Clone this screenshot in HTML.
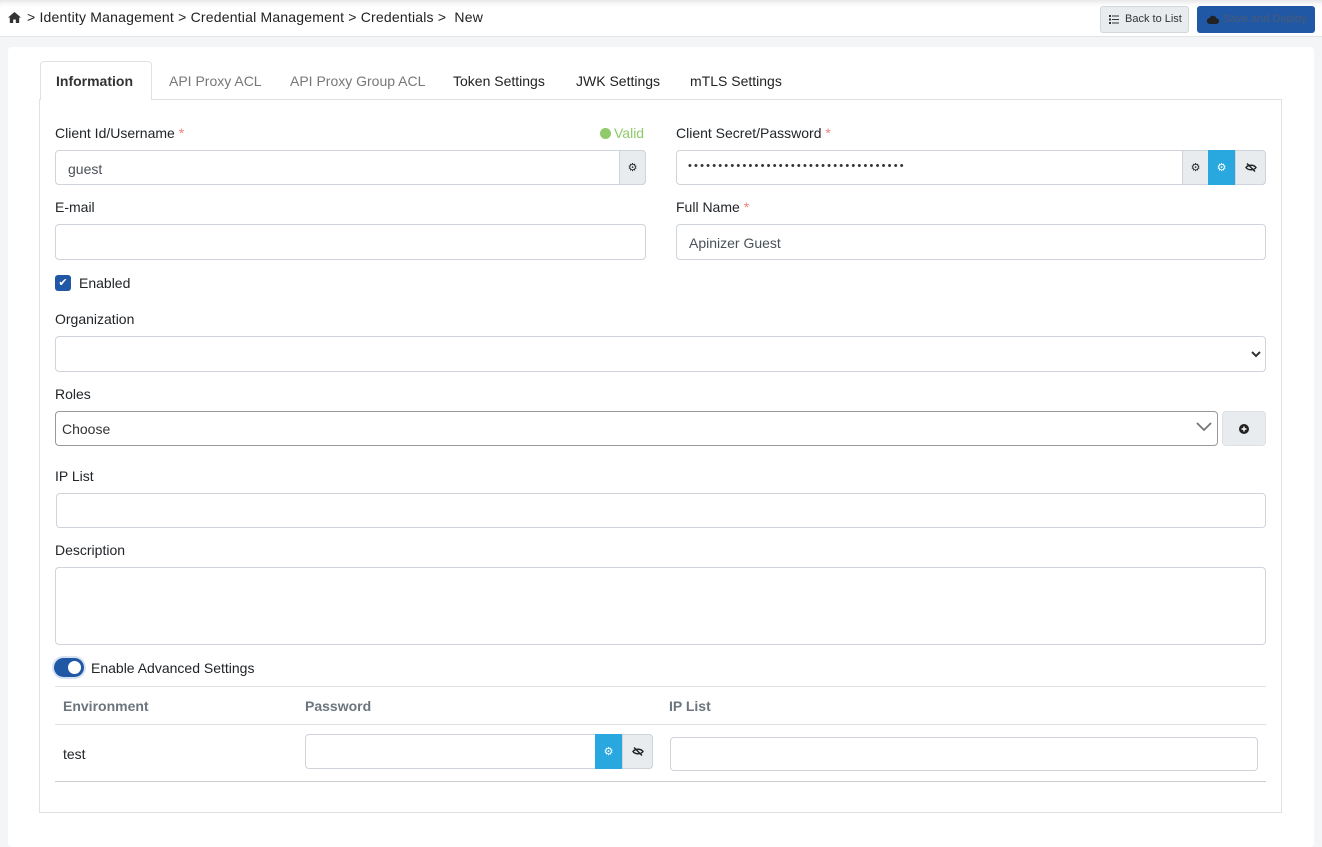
<!DOCTYPE html>
<html><head><meta charset="utf-8"><style>
*{box-sizing:border-box;margin:0;padding:0}
body{width:1322px;height:825px;background:#f4f5f7;font-family:"Liberation Sans",sans-serif;font-size:14px;color:#212529;position:relative;overflow:hidden}
.a{position:absolute;white-space:nowrap}
.top{left:0;top:0;width:1322px;height:37px;background:#fff;border-bottom:1px solid #e2e4e8;box-shadow:inset 0 6px 6px -4px rgba(0,0,0,.12)}
.card{left:8px;top:47px;width:1306px;height:800px;background:#fff;border-radius:4px}
.lbl{font-size:14px;color:#212529}
.req{color:#f08080}
.inp{background:#fff;border:1px solid #ced4da;border-radius:4px}
.add{background:#e9ecef;border:1px solid #ced4da;display:flex;align-items:center;justify-content:center}
.blue{background:#29a8e0;border-color:#29a8e0}
.txt{font-size:14px;color:#495057}
.tab{top:61px;height:38px;line-height:40px;font-size:14px;color:#777}
.th{font-weight:bold;color:#6c757d;font-size:14px}
</style></head><body>
<div class="a top"></div>
<svg class="a" style="left:8px;top:12px" width="13" height="11" viewBox="0 0 13 11"><path d="M6.5 0L0 5.5h1.8V11h3.4V7.5h2.6V11h3.4V5.5H13z" fill="#333"/></svg>
<div class="a" style="left:27px;top:9px;font-size:14px;color:#222;letter-spacing:0.2px">&gt; Identity Management &gt; Credential Management &gt; Credentials &gt;&nbsp; New</div>
<div class="a" style="left:1100px;top:6px;width:89px;height:27px;background:#e9ecef;border:1px solid #d3d6da;border-radius:3px;font-size:11px;line-height:25px;color:#333;padding-left:24px">Back to List</div>
<svg class="a" style="left:1109px;top:15px" width="10" height="9" viewBox="0 0 10 9"><g fill="#333"><rect x="0" y="0" width="2" height="2"/><rect x="0" y="3.5" width="2" height="2"/><rect x="0" y="7" width="2" height="2"/><rect x="3" y="0.5" width="7" height="1"/><rect x="3" y="4" width="7" height="1"/><rect x="3" y="7.5" width="7" height="1"/></g></svg>
<div class="a" style="left:1197px;top:6px;width:118px;height:27px;background:#2158a5;border-radius:3px"></div>
<div class="a" style="left:1223px;top:12px;font-size:11px;line-height:14px;color:#4a5a75">Save and Deploy</div>
<svg class="a" style="left:1207px;top:15px" width="12" height="9" viewBox="0 0 12 9"><path d="M3 9a3 3 0 0 1-.3-6A3.5 3.5 0 0 1 9.3 3.2 2.9 2.9 0 0 1 9 9z" fill="#222"/></svg>
<div class="a card"></div>
<div class="a" style="left:39px;top:99px;width:1243px;height:714px;border:1px solid #dee2e6"></div>
<div class="a" style="left:40px;top:61px;width:112px;height:39px;background:#fff;border:1px solid #dee2e6;border-bottom:none;border-radius:4px 4px 0 0"></div>
<div class="a tab" style="left:56px;color:#333;font-weight:bold">Information</div>
<div class="a tab" style="left:169px">API Proxy ACL</div>
<div class="a tab" style="left:290px">API Proxy Group ACL</div>
<div class="a tab" style="left:453px;color:#222">Token Settings</div>
<div class="a tab" style="left:576px;color:#222">JWK Settings</div>
<div class="a tab" style="left:690px;color:#222">mTLS Settings</div>

<div class="a lbl" style="left:55px;top:125px">Client Id/Username <span class="req">*</span></div>
<div class="a" style="left:600px;top:125px;color:#8fca6a;font-size:14px"><span style="display:inline-block;width:11px;height:11px;border-radius:50%;background:#8fca6a;vertical-align:-1px;margin-right:3px"></span>Valid</div>
<div class="a inp" style="left:55px;top:150px;width:591px;height:35px"></div>
<div class="a txt" style="left:68px;top:161px">guest</div>
<div class="a add" style="left:619px;top:150px;width:27px;height:35px;border-radius:0 4px 4px 0;font-size:11px">⚙</div>

<div class="a lbl" style="left:676px;top:125px">Client Secret/Password <span class="req">*</span></div>
<div class="a inp" style="left:676px;top:150px;width:590px;height:35px"></div>
<div class="a txt" style="left:688px;top:160px;font-size:11px;letter-spacing:2.2px;color:#333">••••••••••••••••••••••••••••••••••••</div>
<div class="a add" style="left:1182px;top:150px;width:27px;height:35px;font-size:11px">⚙</div>
<div class="a add blue" style="left:1208px;top:150px;width:27px;height:35px;font-size:11px;color:#fff">⚙</div>
<div class="a add" style="left:1235px;top:150px;width:31px;height:35px;border-radius:0 4px 4px 0"><svg width="12" height="9" viewBox="0 0 12 9"><path d="M1 4.5C3 1.5 9 1.5 11 4.5 9 7.5 3 7.5 1 4.5z" fill="none" stroke="#222" stroke-width="1.4"/><path d="M2 0.5l8 8" stroke="#222" stroke-width="1.4"/></svg></div>

<div class="a lbl" style="left:55px;top:199px">E-mail</div>
<div class="a inp" style="left:55px;top:224px;width:591px;height:36px"></div>
<div class="a lbl" style="left:676px;top:199px">Full Name <span class="req">*</span></div>
<div class="a inp" style="left:676px;top:224px;width:590px;height:36px"></div>
<div class="a txt" style="left:689px;top:235px">Apinizer Guest</div>

<div class="a" style="left:55px;top:275px;width:16px;height:16px;background:#2158a5;border-radius:3px;color:#fff;font-size:11px;text-align:center;line-height:16px">✔</div>
<div class="a lbl" style="left:79px;top:275px">Enabled</div>

<div class="a lbl" style="left:55px;top:311px">Organization</div>
<div class="a inp" style="left:55px;top:336px;width:1211px;height:36px"></div>
<svg class="a" style="left:1251px;top:350px" width="10" height="8" viewBox="0 0 10 8"><path d="M1 2l4 4 4-4" stroke="#333" stroke-width="2" fill="none"/></svg>

<div class="a lbl" style="left:55px;top:386px">Roles</div>
<div class="a" style="left:55px;top:411px;width:1163px;height:35px;border:1px solid #999;border-radius:4px"></div>
<div class="a txt" style="left:62px;top:421px;color:#333">Choose</div>
<svg class="a" style="left:1196px;top:422px" width="16" height="10" viewBox="0 0 16 10"><path d="M1 1l7 7 7-7" stroke="#777" stroke-width="1.8" fill="none"/></svg>
<div class="a add" style="left:1222px;top:411px;width:44px;height:35px;border-radius:4px;border-color:#dde0e4"><svg width="10" height="10" viewBox="0 0 10 10"><circle cx="5" cy="5" r="5" fill="#222"/><path d="M5 2.5v5M2.5 5h5" stroke="#fff" stroke-width="1.4"/></svg></div>

<div class="a lbl" style="left:55px;top:468px">IP List</div>
<div class="a inp" style="left:56px;top:493px;width:1210px;height:35px"></div>
<div class="a lbl" style="left:55px;top:542px">Description</div>
<div class="a inp" style="left:55px;top:567px;width:1211px;height:78px"></div>

<div class="a" style="left:54px;top:658px;width:30px;height:19px;border-radius:10px;background:#2158a5;box-shadow:0 0 0 2px #d6e2f2"></div>
<div class="a" style="left:68px;top:661px;width:13px;height:13px;border-radius:50%;background:#fff"></div>
<div class="a lbl" style="left:91px;top:660px">Enable Advanced Settings</div>

<div class="a" style="left:55px;top:686px;width:1211px;height:1px;background:#dee2e6"></div>
<div class="a th" style="left:63px;top:698px">Environment</div>
<div class="a th" style="left:305px;top:698px">Password</div>
<div class="a th" style="left:669px;top:698px">IP List</div>
<div class="a" style="left:55px;top:724px;width:1211px;height:1px;background:#dee2e6"></div>
<div class="a lbl" style="left:63px;top:746px">test</div>
<div class="a inp" style="left:305px;top:734px;width:348px;height:35px"></div>
<div class="a add blue" style="left:595px;top:734px;width:27px;height:35px;color:#fff;font-size:11px">⚙</div>
<div class="a add" style="left:622px;top:734px;width:31px;height:35px;border-radius:0 4px 4px 0"><svg width="12" height="9" viewBox="0 0 12 9"><path d="M1 4.5C3 1.5 9 1.5 11 4.5 9 7.5 3 7.5 1 4.5z" fill="none" stroke="#222" stroke-width="1.4"/><path d="M2 0.5l8 8" stroke="#222" stroke-width="1.4"/></svg></div>
<div class="a inp" style="left:670px;top:737px;width:588px;height:34px"></div>
<div class="a" style="left:55px;top:781px;width:1211px;height:1px;background:#ccc"></div>
</body></html>
